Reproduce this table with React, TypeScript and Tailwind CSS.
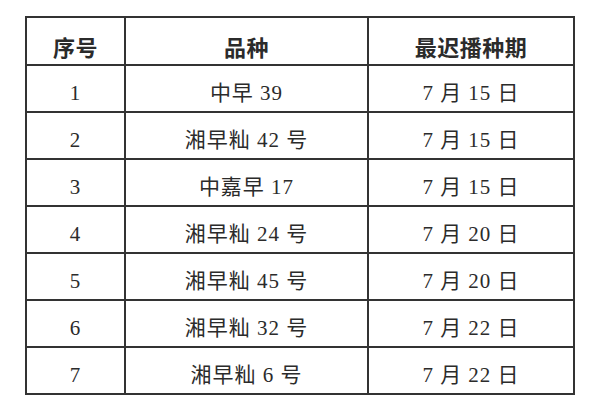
const rows: [string, string, string][] = [
  ["1", "中早 39", "7 月 15 日"],
  ["2", "湘早籼 42 号", "7 月 15 日"],
  ["3", "中嘉早 17", "7 月 15 日"],
  ["4", "湘早籼 24 号", "7 月 20 日"],
  ["5", "湘早籼 45 号", "7 月 20 日"],
  ["6", "湘早籼 32 号", "7 月 22 日"],
  ["7", "湘早籼 6 号", "7 月 22 日"],
];

export default function App() {
  return (
    <div className="h-[415px] w-[600px] bg-white pl-[25px] pt-[16px] font-['Liberation_Serif','Noto_Sans_CJK_SC',serif] text-[#2b2b2b]">
      <table className="w-[548px] table-fixed border-collapse">
        <colgroup>
          <col className="w-[99px]" />
          <col className="w-[243px]" />
          <col className="w-[206px]" />
        </colgroup>
        <thead>
          <tr className="h-[48px]">
            {["序号", "品种", "最迟播种期"].map((h) => (
              <th
                key={h}
                className="border-2 border-[#333] pt-[10px] text-center font-['Noto_Sans_CJK_SC',sans-serif] text-[22px] leading-none font-bold tracking-[0.5px]"
              >
                {h}
              </th>
            ))}
          </tr>
        </thead>
        <tbody>
          {rows.map((r) => (
            <tr key={r[0]} className="h-[47px]">
              {r.map((c, i) => (
                <td
                  key={i}
                  className="border-2 border-[#333] pt-[10px] text-center text-[21px] leading-none tracking-[1px]"
                >
                  {c}
                </td>
              ))}
            </tr>
          ))}
        </tbody>
      </table>
    </div>
  );
}
